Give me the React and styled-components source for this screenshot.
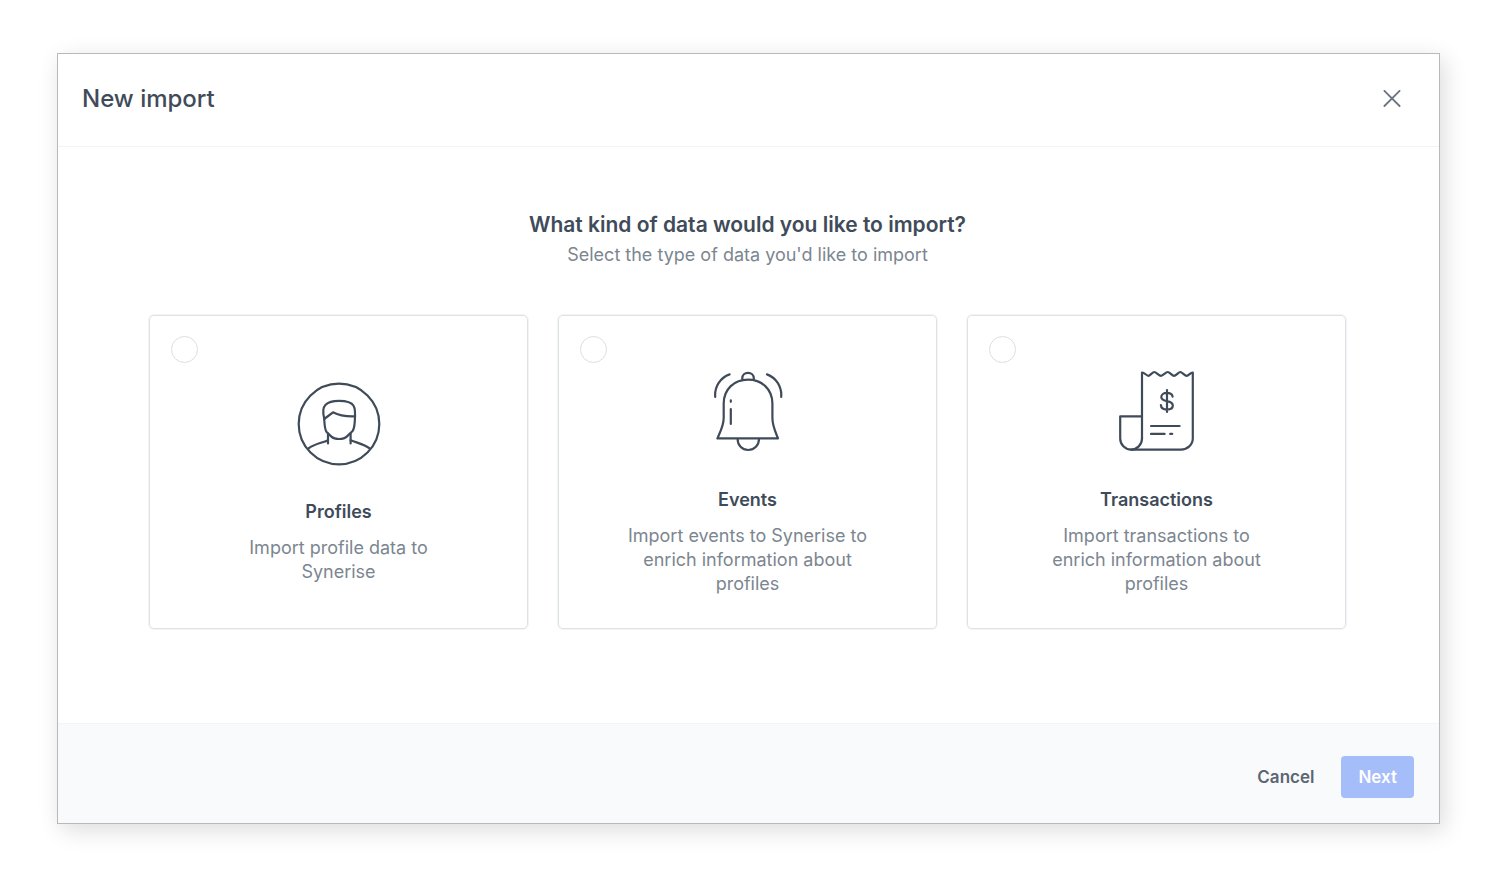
import React, { useState } from 'react'
import styled, { createGlobalStyle } from 'styled-components'

const GlobalStyle = createGlobalStyle`
  *,
  *::before,
  *::after {
    box-sizing: border-box;
  }
  body {
    margin: 0;
    background: #fff;
    color: #404b5a;
    font-family: Inter, 'Liberation Sans', sans-serif;
  }
  h1,
  h2,
  p {
    margin: 0;
  }
`

const ProfileIcon = () => (
  <Icon viewBox='0 0 96 96' aria-hidden='true'>
    <circle cx='48' cy='48' r='40.3' />
    <path d='M33.2 42.5C31.8 37 32 31.5 34.6 28.8C37.2 26 43 24.8 48 24.8C54.5 24.8 60.5 26.2 62.6 29.8C64.6 33 64.3 38 63.8 45C63.5 50 63.4 52.5 61.6 55L56 60.4C54 62.4 52 63 48 63C44.4 63 42.5 62.6 40.4 60.6L35.6 56C33.6 53.6 33.6 49 33.2 42.5' />
    <path d='M33.2 43L42 36.3C48 39.6 54 40.6 63.8 40.3' />
    <path d='M37 57.5V67.5M59.6 57.5V67.5' />
    <path d='M37 64.2C31 67 23 68 17.6 72.4M59.6 64.2C66 67 73 68 78.6 72.4' />
  </Icon>
)

const BellIcon = () => (
  <Icon viewBox='0 0 96 96' aria-hidden='true'>
    <path d='M17.4 74.4H78C75 67 72.4 61.5 72.4 54V39.5C72.4 25 61.6 15.6 48 15.6S23.7 25 23.7 39.5V54C23.7 61.5 20.6 67 17.4 74.4Z' />
    <path d='M42.3 15.4V14.2C42.3 10.9 44.8 8.8 48 8.8S53.8 10.9 53.8 14.2V15.4' />
    <path d='M37.6 75C37.6 81 42 86 48.2 86S59 81 59 75' />
    <path d='M15.2 33C14.4 22.5 20.5 13.6 29.6 10.4M81.2 33C82 22.5 75.9 13.6 67 10.4' />
    <path d='M30.8 45V60M30.8 36.4V37.8' />
  </Icon>
)

const ReceiptIcon = () => (
  <Icon viewBox='0 0 96 96' aria-hidden='true'>
    <path d='M33 75V8.6C35 8 37.5 11.8 39.3 11.8S43.5 8 45.3 8S50 11.8 52 11.8S56.7 8 58.7 8S63 11.8 65 11.8S69.5 8 71.3 8S75.7 11.8 77.7 11.8S82 8 83.8 8.6V74.6C83.8 80.8 78.4 85.6 72 85.6H22' />
    <path d='M33 52.4H11.2V74.4C11.2 80.6 16 85.6 22 85.6S33 80.8 33 74.4' />
    <path d='M42 62H70.6M42 69.9H55.6M61.2 69.9H63.2' />
    <path d='M58 26V48M63.6 32.6C63.2 30 60.6 28.9 57.8 28.9C54.6 28.9 52.3 30.6 52.3 33.1C52.3 35.8 54.8 36.5 57.8 37.1C61.2 37.8 63.8 38.8 63.8 41.5C63.8 44.2 61.2 45.6 57.9 45.6C54.6 45.6 52.1 44 51.9 41.2' />
  </Icon>
)

const kinds = [
  {
    id: 'profiles',
    title: 'Profiles',
    icon: <ProfileIcon />,
    description: 'Import profile data to Synerise',
  },
  {
    id: 'events',
    title: 'Events',
    icon: <BellIcon />,
    description: 'Import events to Synerise to enrich information about profiles',
  },
  {
    id: 'transactions',
    title: 'Transactions',
    icon: <ReceiptIcon />,
    description: 'Import transactions to enrich information about profiles',
  },
]

const App = () => {
  const [selected, setSelected] = useState(null)

  return (
    <>
      <GlobalStyle />
      <Page>
        <Modal role='dialog' aria-labelledby='modal-title'>
          <Header>
            <Title id='modal-title'>New import</Title>
            <CloseButton type='button' aria-label='Close'>
              <svg width='18' height='18' viewBox='0 0 18 18'>
                <path d='M1.4 0.8L16.6 16M16.6 0.8L1.4 16' />
              </svg>
            </CloseButton>
          </Header>
          <Body>
            <Question>What kind of data would you like to import?</Question>
            <Hint>Select the type of data you'd like to import</Hint>
            <Cards role='radiogroup' aria-label='Type of data'>
              {kinds.map(({ id, title, icon, description }) => (
                <Card key={id} htmlFor={id}>
                  <Radio
                    type='radio'
                    name='kind'
                    id={id}
                    checked={selected === id}
                    onChange={() => setSelected(id)}
                  />
                  {icon}
                  <CardTitle>{title}</CardTitle>
                  <Description>{description}</Description>
                </Card>
              ))}
            </Cards>
          </Body>
          <Footer>
            <Button type='button'>Cancel</Button>
            <Button type='button' $primary disabled={!selected}>
              Next
            </Button>
          </Footer>
        </Modal>
      </Page>
    </>
  )
}

const Page = styled.main`
  padding: 53px 48px 52px 57px;
`

const Modal = styled.section`
  border: 1px solid #b8b9ba;
  background: #fff;
  box-shadow: 4px 6px 22px rgba(0, 0, 0, 0.14);
`

const Header = styled.header`
  display: flex;
  align-items: center;
  justify-content: space-between;
  padding: 28px 32px 30px 24px;
  border-bottom: 1px solid #f2f3f4;
`

const Title = styled.h1`
  font-size: 24px;
  line-height: 34px;
  font-weight: 500;
`

const CloseButton = styled.button`
  display: flex;
  padding: 6px;
  border: 0;
  background: none;
  cursor: pointer;
  svg {
    fill: none;
    stroke: #6a7580;
    stroke-width: 1.8;
    stroke-linecap: round;
  }
`

const Body = styled.div`
  padding: 62px 93px 94px 91px;
  text-align: center;
`

const Question = styled.h2`
  font-size: 21px;
  line-height: 32px;
  font-weight: 600;
`

const Hint = styled.p`
  margin-top: 2px;
  font-size: 18px;
  line-height: 24px;
  color: #7c8690;
`

const Cards = styled.div`
  display: grid;
  grid-template-columns: repeat(auto-fit, minmax(300px, 1fr));
  gap: 30px;
  margin-top: 48px;
`

const Card = styled.label`
  position: relative;
  display: flex;
  flex-direction: column;
  align-items: center;
  justify-content: center;
  padding: 32px;
  border: 1px solid #dfe2e5;
  border-radius: 5px;
  box-shadow: 0 0 0 1px #f3f4f5;
  cursor: pointer;
`

const Radio = styled.input`
  appearance: none;
  position: absolute;
  top: 20px;
  left: 21px;
  width: 27px;
  height: 27px;
  margin: 0;
  border: 1px solid #dcdee0;
  border-radius: 50%;
  background: #fff;
  &:checked {
    border: 8px solid #2f6bf2;
  }
`

const Icon = styled.svg`
  width: 96px;
  height: 96px;
  margin: 16px 0 28px;
  fill: none;
  stroke: #404b5a;
  stroke-width: 2.2;
  stroke-linecap: round;
  stroke-linejoin: round;
`

const CardTitle = styled.span`
  font-size: 18px;
  line-height: 24px;
  font-weight: 600;
`

const Description = styled.span`
  max-width: 242px;
  margin-top: 12px;
  font-size: 18px;
  line-height: 24px;
  color: #7c8690;
`

const Footer = styled.footer`
  display: flex;
  align-items: center;
  justify-content: flex-end;
  gap: 10px;
  padding: 32px 25px 25px;
  border-top: 1px solid #f3f4f6;
  background: #f9fafc;
`

const Button = styled.button`
  padding: 9px 17px;
  border: 0;
  border-radius: 4px;
  background: ${(props) => (props.$primary ? '#a5bdf8' : 'none')};
  color: ${(props) => (props.$primary ? '#fff' : '#5c6672')};
  font-family: inherit;
  font-size: 17px;
  line-height: 24px;
  font-weight: 600;
  cursor: pointer;
`

export default App
